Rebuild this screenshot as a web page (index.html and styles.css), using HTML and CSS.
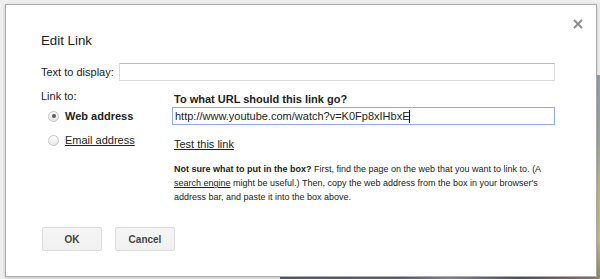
FILE: index.html
```html
<!DOCTYPE html>
<html lang="en">
<head>
  <meta charset="UTF-8" />
  <title>Edit Link</title>
  <link rel="stylesheet" href="styles.css">
</head>
<body>
  <div class="backdrop">
    <div class="dialog">
      <button class="close" aria-label="Close">
        <svg width="10" height="10" viewBox="0 0 10 10"><path d="M1 1L9 9M9 1L1 9" stroke="#8c8c8c" stroke-width="2"/></svg>
      </button>
      <div class="title">Edit Link</div>

      <div class="display-row">
        <label for="displayText">Text to display:</label>
        <input id="displayText" class="text-input" type="text" value="" />
      </div>

      <div class="link-section">
        <div class="link-to">
          <div class="link-label">Link to:</div>
          <label class="radio-row">
            <span class="radio checked"></span>
            <span class="radio-text bold">Web address</span>
          </label>
          <label class="radio-row">
            <span class="radio"></span>
            <span class="radio-text underline">Email address</span>
          </label>
        </div>

        <div class="link-detail">
          <div class="heading">To what URL should this link go?</div>
          <div class="url-input">http://www.youtube.com/watch?v=K0Fp8xIHbxE<span class="caret"></span></div>
          <a class="test-link" href="#">Test this link</a>
          <p class="help"><b>Not sure what to put in the box?</b> First, find the page on the web that you want to link to. (A <a href="#">search engine</a> might be useful.) Then, copy the web address from the box in your browser's address bar, and paste it into the box above.</p>
        </div>
      </div>

      <div class="buttons">
        <button class="btn">OK</button>
        <button class="btn">Cancel</button>
      </div>
    </div>
  </div>
</body>
</html>
```

FILE: styles.css
```css
body {
  margin: 0;
  font-family: 'Liberation Sans', Arial, sans-serif;
  color: #222;
  background-color: #eeeeee;
  height: 279px;
  overflow: hidden;
}

.backdrop {
  height: 279px;
  padding: 4px 0 0 5px;
  box-sizing: border-box;
  background:
    linear-gradient(to bottom, transparent 75px, #8ea0b0 75px, #9aa6a0 140px, #b8b870 180px, #c8c060 240px, #909060 276px) right top / 4px 100% no-repeat,
    linear-gradient(to right, transparent 280px, #5a6070 280px, #606878 400px, #8890a0 450px, #505868 520px, #a08070 600px) left bottom / 100% 3px no-repeat,
    #eeeeee;
}

.dialog {
  position: relative;
  width: 592px;
  height: 273px;
  box-sizing: border-box;
  background-color: #fff;
  border: 1px solid #acacac;
  box-shadow: 0 1px 3px rgba(0, 0, 0, 0.2);
  padding: 27px 41px 0 35px;
  display: flex;
  flex-direction: column;
}

.close {
  position: absolute;
  top: 14px;
  right: 13px;
  border: none;
  background: none;
  padding: 0;
  width: 10px;
  height: 10px;
  display: flex;
}

.title {
  font-size: 13.3px;
  line-height: 17px;
  color: #222;
}

.display-row {
  display: flex;
  align-items: center;
  margin-top: 14px;
  gap: 5px;
  font-size: 11px;
}

.text-input {
  flex: 1;
  height: 18px;
  box-sizing: border-box;
  border: 1px solid #d9d9d9;
  border-top-color: #bdbdbd;
  padding: 0 2px;
  font: inherit;
}

.link-section {
  display: flex;
  margin-top: 8px;
  font-size: 11px;
}

.link-to {
  width: 131px;
  flex-shrink: 0;
}

.link-label {
  line-height: 14px;
}

.radio-row {
  display: flex;
  align-items: center;
  gap: 6px;
  margin-left: 7px;
  margin-top: 6px;
  height: 14px;
}

.radio-row + .radio-row {
  margin-top: 10px;
}

.radio {
  width: 9px;
  height: 9px;
  border-radius: 50%;
  border: 1px solid #c4c4c4;
  background: linear-gradient(#ffffff, #e6e6e6);
  display: flex;
  align-items: center;
  justify-content: center;
}

.radio.checked::after {
  content: '';
  width: 4px;
  height: 4px;
  border-radius: 50%;
  background-color: #5a5a5a;
}

.bold {
  font-weight: bold;
}

.underline {
  text-decoration: underline;
}

.link-detail {
  flex: 1;
  padding-left: 2px;
}

.heading {
  font-weight: bold;
  line-height: 14px;
  margin-top: 3px;
}

.url-input {
  margin-top: 1px;
  margin-left: -2px;
  height: 18px;
  box-sizing: border-box;
  border: 1px solid #8fb0df;
  box-shadow: inset 0 0 1px #c0d4ef;
  padding: 0 2px;
  line-height: 16px;
  display: flex;
  align-items: center;
}

.caret {
  display: inline-block;
  width: 1px;
  height: 13px;
  background-color: #000;
}

.test-link {
  display: block;
  width: fit-content;
  margin-top: 12px;
  color: #222;
  line-height: 14px;
}

.help {
  margin: 11px 0 0;
  font-size: 9px;
  line-height: 14px;
  color: #222;
}

.help a {
  color: #222;
}

.buttons {
  display: flex;
  gap: 13px;
  margin-top: auto;
  margin-bottom: 25px;
  margin-left: 1px;
}

.btn {
  width: 60px;
  height: 24px;
  border: 1px solid #dcdcdc;
  border-radius: 2px;
  background: linear-gradient(#f5f5f5, #f1f1f1);
  font-family: inherit;
  font-size: 10px;
  font-weight: bold;
  color: #444;
}
```
